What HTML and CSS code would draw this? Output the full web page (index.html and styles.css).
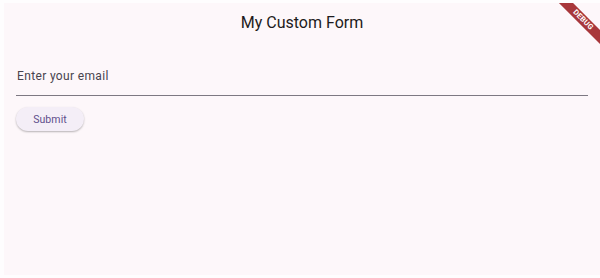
FILE: index.html
```html
<!DOCTYPE html>
<html lang="en">
<head>
    <meta charset="UTF-8">
    <meta name="viewport" content="width=device-width, initial-scale=1.0">
    <title>My Custom Form</title>
    <link rel="stylesheet" href="styles.css">
</head>
<body>
    <div class="app">
        <header class="appbar">My Custom Form</header>
        <form class="form" onsubmit="return false">
            <label class="field">
                <input type="email" class="field-input" placeholder="Enter your email">
            </label>
            <button type="submit" class="submit">Submit</button>
        </form>
        <div class="banner-wrap"><div class="banner">DEBUG</div></div>
    </div>
</body>
</html>
```

FILE: styles.css
```css
html, body {
    margin: 0;
    height: 100%;
}
body {
    background: #fefdfe;
    padding: 3px 0 3px 4px;
    box-sizing: border-box;
    font-family: Roboto, "Liberation Sans", sans-serif;
}
.app {
    position: relative;
    height: 272px;
    background: #fdf7fa;
    overflow: hidden;
}
.appbar {
    height: 42px;
    padding-bottom: 4px;
    box-sizing: border-box;
    display: flex;
    align-items: center;
    justify-content: center;
    font-size: 16px;
    color: #1d1b20;
}
.form {
    padding: 12px;
}
.field {
    display: block;
    padding-top: 10px;
    padding-bottom: 10px;
    border-bottom: 1px solid #7d7882;
}
.field-input {
    display: block;
    width: 100%;
    border: none;
    background: transparent;
    outline: none;
    padding: 0 0 0 1px;
    height: 18px;
    font-family: Roboto, "Liberation Sans", sans-serif;
    font-size: 12px;
    letter-spacing: 0.35px;
    color: #1d1b20;
}
.field-input::placeholder {
    color: #48444e;
}
.submit {
    display: block;
    margin-top: 11px;
    width: 68px;
    height: 24px;
    border: none;
    border-radius: 12px;
    background: #f4eef7;
    box-shadow: 0 1px 2px rgba(0, 0, 0, 0.28);
    font-family: Roboto, "Liberation Sans", sans-serif;
    font-size: 10.5px;
    font-weight: 400;
    letter-spacing: 0.1px;
    color: #5f4f8c;
    padding: 0;
}
.banner-wrap {
    position: absolute;
    top: 0;
    right: 0;
    width: 45px;
    height: 45px;
    overflow: hidden;
}
.banner {
    position: absolute;
    top: 12px;
    left: -12px;
    width: 80px;
    height: 10px;
    line-height: 10px;
    transform: rotate(45deg);
    background: #a8373b;
    color: #fff;
    font-size: 7.5px;
    font-weight: 700;
    text-align: center;
    letter-spacing: 0.2px;
}
```
